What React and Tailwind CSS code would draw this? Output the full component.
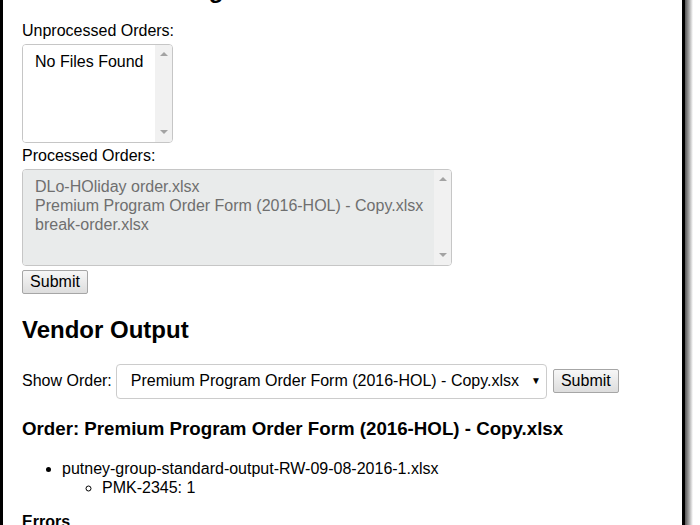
import React from 'react';

const ScrollTrack = () => (
    <div className="w-[17px] shrink-0 bg-[#f1f1f1] flex flex-col items-center justify-between pt-[7px] pb-[8px]">
        <div className="w-0 h-0 border-x-[4px] border-x-transparent border-b-[4px] border-b-[#a3a3a3]" />
        <div className="w-0 h-0 border-x-[4px] border-x-transparent border-t-[4px] border-t-[#a3a3a3]" />
    </div>
);

const ListBox = ({ items, className, disabled }) => (
    <div className={`flex shrink-0 rounded-[4px] border border-[#c6c6c6] overflow-hidden ${className}`}>
        <div className={`flex-1 pl-[12px] pt-[7px] leading-[19px] ${disabled ? 'bg-[#e9ebeb] text-[#6f6f6f]' : 'bg-white text-black'}`}>
            {items.map((item) => (
                <div key={item} className="whitespace-nowrap">{item}</div>
            ))}
        </div>
        <ScrollTrack />
    </div>
);

const SubmitButton = ({ className = '' }) => (
    <button className={`h-[24px] w-[66px] shrink-0 border border-[#a6a6a6] rounded-[2px] bg-linear-to-b from-[#f7f7f7] to-[#dddddd] text-[16px] leading-[20px] text-black ${className}`}>
        Submit
    </button>
);

export default function App() {
    return (
        <div className="w-[700px] h-[525px] overflow-hidden bg-white flex text-[16px] text-black" style={{ fontFamily: '"Liberation Sans", Arial, sans-serif' }}>
            <div className="w-[685px] h-full shrink-0 overflow-hidden border-l-[3px] border-r-[3px] border-black pl-[19px] flex flex-col items-start [&>*]:shrink-0">
                {/* Order processing */}
                <div className="mt-[-24px] text-[24px] font-bold leading-[27.6px]">Order Processing</div>
                <div className="mt-[18px] leading-[18px]">Unprocessed Orders:</div>
                <ListBox className="mt-[4px] w-[151px] h-[99px]" items={['No Files Found']} />
                <div className="mt-[4px] leading-[18px]">Processed Orders:</div>
                <ListBox
                    className="mt-[4px] w-[430px] h-[97px]"
                    disabled
                    items={[
                        'DLo-HOliday order.xlsx',
                        'Premium Program Order Form (2016-HOL) - Copy.xlsx',
                        'break-order.xlsx',
                    ]}
                />
                <SubmitButton className="mt-[4px]" />

                {/* Vendor output */}
                <h2 className="mt-[22px] text-[24px] font-bold leading-[27px]">Vendor Output</h2>
                <div className="mt-[21px] flex items-center">
                    <span className="leading-[18px]">Show Order:</span>
                    <div className="ml-[4px] h-[35px] w-[431px] rounded-[4px] border border-[#cccccc] bg-white flex items-center justify-between pl-[14px] pr-[5px]">
                        <span className="whitespace-nowrap">Premium Program Order Form (2016-HOL) - Copy.xlsx</span>
                        <span className="text-[10px] leading-none">▼</span>
                    </div>
                    <SubmitButton className="ml-[6px]" />
                </div>

                <h3 className="mt-[19px] text-[18.72px] font-bold leading-[21.5px] whitespace-nowrap">
                    Order: Premium Program Order Form (2016-HOL) - Copy.xlsx
                </h3>
                <ul className="mt-[20px] list-disc pl-[40px] leading-[19px]">
                    <li>
                        putney-group-standard-output-RW-09-08-2016-1.xlsx
                        <ul className="list-[circle] pl-[40px]">
                            <li>PMK-2345: 1</li>
                        </ul>
                    </li>
                </ul>
                <h4 className="mt-[16px] font-bold leading-[18px]">Errors</h4>
            </div>
            <div className="w-[8px] h-full shrink-0 bg-linear-to-r from-[#555555] to-white" />
        </div>
    );
}
